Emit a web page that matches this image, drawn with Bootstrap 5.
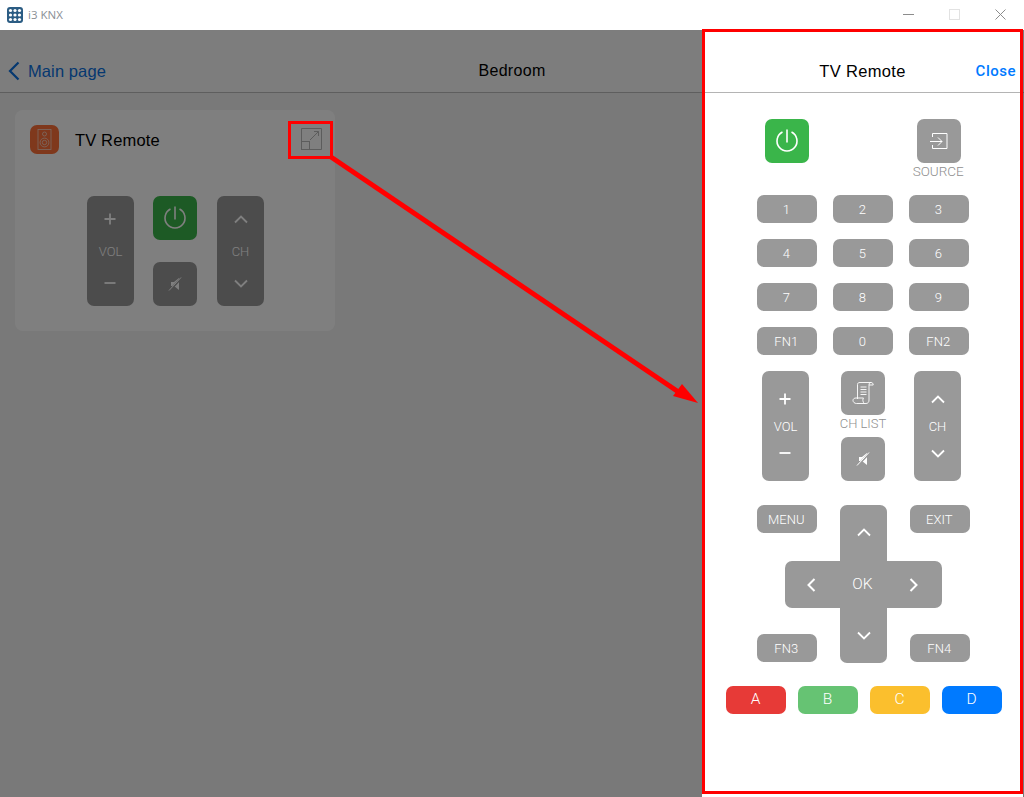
<!DOCTYPE html>
<html lang="en">
<head>
<meta charset="utf-8">
<title>i3 KNX</title>
<link href="https://cdn.jsdelivr.net/npm/bootstrap@5.3.0/dist/css/bootstrap.min.css" rel="stylesheet">
<style>
html,body{height:797px;overflow:hidden;background:#fff}
body{font-family:"Liberation Sans",Arial,sans-serif;color:#000}
.titlebar{height:30px;background:#fff;padding-left:7px}
.app-mark{width:16px;height:16px;display:block}
.app-name{font-family:"Open Sans",sans-serif;font-size:11.5px;color:#8a8f96;margin-left:5px}
.win-controls{margin-left:auto;margin-right:1px;padding-bottom:1px}
.win-btn{width:46px;height:29px;display:flex;align-items:center;justify-content:center}
.win-btn svg{display:block}
.workspace{height:767px;background:#f2f2f2}
.page-head{height:63px;background:#fafafa;border-bottom:1px solid #bcbcbc;padding-top:20px}
.back-link{color:#0a70e0;font-size:16.5px;text-decoration:none;padding-left:8px;gap:8px;letter-spacing:.1px}
.page-title{font-size:16px;letter-spacing:.3px}
.page-body{padding:17px 15px}
.room-card{width:320px;height:221px;background:#fff;border-radius:8px;padding:15px}
.speaker-icon{width:29px;height:29px;border-radius:7px;background:#ff7038;display:block}
.room-card-title{font-size:16.5px;margin-left:16px;letter-spacing:.15px;padding-top:1px}
.expand-icon{display:block;margin:-1px -2px 0 auto}
.mini-controls{margin-top:42px;gap:19px;padding-left:57px}
.mini-mid{gap:22px;margin-right:1px}
.rbtn{background:#999;color:#fff;border:0;padding:0;border-radius:7px;font-family:Roboto,sans-serif;font-weight:300;font-size:13px;line-height:1;display:flex;align-items:center;justify-content:center}
.rbtn:hover,.rbtn:active{background:#999;color:#fff}
.rbtn svg{display:block}
.sq{width:44px;height:44px}
.power,.power:hover{background:#3ab54a}
.rocker{width:47px;height:110px;display:grid;justify-items:center;align-items:center;grid-template-rows:40px 14px 40px;padding:8px 0}
.rocker-mini{grid-template-rows:46px 18px 46px;padding:0}
.backdrop{position:absolute;inset:30px 0 0 0;background:rgba(0,0,0,.5)}
.remote-panel{position:absolute;top:30px;left:702px;bottom:0;width:321px;background:#fff}
.remote-head{height:63px;border-bottom:1px solid #b4b4b4;padding:20px 0 0 1px}
.remote-title{font-size:16.5px;letter-spacing:.35px;flex:1;text-align:center;margin-right:1px}
.remote-close{position:absolute;right:7px;top:32px;color:#007aff;font-family:Roboto,sans-serif;font-size:15px;font-weight:500;letter-spacing:.5px;line-height:18px;text-decoration:none}
.remote-body{padding:26px 0 0 1px}
.key-grid{display:grid;grid-template-columns:repeat(3,60px);gap:16px;justify-content:center}
.key{height:28px;width:60px}
.pad-text{padding-right:1.5px}
.cell-center{display:flex;justify-content:center}
.cell-stack{display:flex;flex-direction:column;align-items:center}
.btn-label{font-family:Roboto,sans-serif;font-weight:300;font-size:13px;color:#8f8f8f;line-height:16px}
.label-source{font-size:13.5px;white-space:nowrap;padding-right:1.5px}
.top-row{margin-bottom:16px;height:60px}
.mid-row{margin-top:16px;padding-right:3px}
.mid-col{width:44px;margin:0 29px 0 32px}
.label-chlist{height:22px;line-height:17px;white-space:nowrap}
.nav-grid{display:grid;grid-template-columns:28px 32px 23px 47px 23px 32px 28px;grid-template-rows:28px 28px 47px 26px 29px;justify-content:center;margin:24px 0 0 1px}
.nav-menu{grid-area:1/1/2/3}
.nav-exit{grid-area:1/6/2/8}
.nav-fn3{grid-area:5/1/6/3;height:28px}
.nav-fn4{grid-area:5/6/6/8;height:28px}
.nav-v{grid-area:1/4/6/5;flex-direction:column;justify-content:space-between;padding:23px 0}
.nav-h{grid-area:3/2/4/7;justify-content:space-between;padding:0 24px 0 22px}
.ok-text{font-size:15.5px}
.color-row{gap:12px;margin:23px 0 0 1px}
.c-a,.c-a:hover{background:#e73a37}
.c-b,.c-b:hover{background:#66c373}
.c-c,.c-c:hover{background:#fbbf2d}
.c-d,.c-d:hover{background:#007aff}
.color-row .rbtn{font-size:15.5px}
.mark-box{position:absolute;border:3px solid #f00;pointer-events:none}
.mark-panel{left:702px;top:29px;width:321px;height:765px}
.mark-icon{left:288px;top:121px;width:45px;height:38px}
.mark-arrow{position:absolute;left:0;top:0;pointer-events:none}
</style>
</head>
<body>
<svg width="0" height="0" class="position-absolute">
<defs>
<symbol id="i-power" viewBox="0 0 24 24"><path d="M7.500 3.070A10 10 0 1 0 16.500 3.070" fill="none" stroke="currentColor" stroke-width="1.600"/><path d="M12 .5v13" stroke="currentColor" stroke-width="1.600" fill="none"/></symbol>
<symbol id="i-mute" viewBox="0 0 16 16"><path d="M4 6h3l5-4v12l-5-4H4z" fill="currentColor"/><path d="M2.500 14.500L14.500 2" stroke="#999" stroke-width="2.200"/><path d="M2 14.500L14 1.500" stroke="currentColor" stroke-width="1"/></symbol>
<symbol id="i-up" viewBox="0 0 14 9"><path d="M1 7.500L7 1.500l6 6" fill="none" stroke="currentColor" stroke-width="1.800"/></symbol>
<symbol id="i-down" viewBox="0 0 14 9"><path d="M1 1.500L7 7.500l6-6" fill="none" stroke="currentColor" stroke-width="1.800"/></symbol>
<symbol id="i-left" viewBox="0 0 9 14"><path d="M7.500 1L1.500 7l6 6" fill="none" stroke="currentColor" stroke-width="2"/></symbol>
<symbol id="i-right" viewBox="0 0 9 14"><path d="M1.500 1l6 6-6 6" fill="none" stroke="currentColor" stroke-width="2"/></symbol>
<symbol id="i-plus" viewBox="0 0 12 12"><path d="M6 .500v11M.500 6h11" stroke="currentColor" stroke-width="1.800" fill="none"/></symbol>
<symbol id="i-minus" viewBox="0 0 12 4"><path d="M.500 2h11" stroke="currentColor" stroke-width="1.800" fill="none"/></symbol>
</defs>
</svg>

<div class="titlebar d-flex align-items-center">
  <svg class="app-mark" viewBox="0 0 16 16"><rect width="16" height="16" rx="3" fill="#2b5c83"/><g fill="#fff"><circle cx="3.500" cy="3.500" r="1.600"/><circle cx="8" cy="3.500" r="1.600"/><circle cx="12.500" cy="3.500" r="1.600"/><circle cx="3.500" cy="8" r="1.600"/><circle cx="8" cy="8" r="1.600"/><circle cx="12.500" cy="8" r="1.600"/><circle cx="3.500" cy="12.500" r="1.600"/><circle cx="8" cy="12.500" r="1.600"/><circle cx="12.500" cy="12.500" r="1.600"/></g></svg>
  <span class="app-name">i3 KNX</span>
  <div class="win-controls d-flex">
    <div class="win-btn"><svg width="11" height="11" viewBox="0 0 11 11"><path d="M0 5.500h11" stroke="#8c8c8c" fill="none"/></svg></div>
    <div class="win-btn"><svg width="11" height="11" viewBox="0 0 11 11"><rect x=".5" y=".5" width="10" height="10" fill="none" stroke="#e2e2e2"/></svg></div>
    <div class="win-btn"><svg width="11" height="11" viewBox="0 0 11 11"><path d="M.5.500l10 10M10.500.500l-10 10" stroke="#8c8c8c" fill="none"/></svg></div>
  </div>
</div>

<div class="workspace">
  <header class="page-head d-flex align-items-center position-relative">
    <a href="#" class="back-link d-flex align-items-center">
      <svg width="12" height="20" viewBox="0 0 12 20"><path d="M10.500 1.500L2 10l8.500 8.500" fill="none" stroke="currentColor" stroke-width="2.200"/></svg>
      Main page
    </a>
    <div class="page-title position-absolute start-50 translate-middle-x">Bedroom</div>
  </header>
  <main class="page-body">
    <section class="room-card">
      <div class="d-flex align-items-center">
        <svg class="speaker-icon" viewBox="0 0 29 29"><rect x="8" y="4.500" width="13" height="20" fill="none" stroke="#f5d5c8" stroke-width=".8"/><circle cx="14.500" cy="9" r="2" fill="none" stroke="#f5d5c8" stroke-width=".8"/><circle cx="14.500" cy="17.500" r="4.400" fill="none" stroke="#f5d5c8" stroke-width=".8"/><circle cx="14.500" cy="17.500" r="2.200" fill="none" stroke="#f5d5c8" stroke-width=".8"/></svg>
        <span class="room-card-title">TV Remote</span>
        <svg class="expand-icon" width="22" height="22" viewBox="0 0 22 22"><path d="M1.500 13.500V.5h20v21H9.500" fill="none" stroke="#b8b8b8"/><rect x="1.500" y="13.500" width="8" height="8" fill="none" stroke="#b8b8b8"/><path d="M10 12l8.500-8.500M14 3.500h4.500V8" fill="none" stroke="#b8b8b8"/></svg>
      </div>
      <div class="mini-controls d-flex">
        <button class="btn rbtn rocker rocker-mini"><svg width="12" height="12"><use href="#i-plus"/></svg><span>VOL</span><svg width="12" height="4"><use href="#i-minus"/></svg></button>
        <div class="mini-mid d-flex flex-column">
          <button class="btn rbtn sq power"><svg width="24" height="24"><use href="#i-power"/></svg></button>
          <button class="btn rbtn sq"><svg width="16" height="16"><use href="#i-mute"/></svg></button>
        </div>
        <button class="btn rbtn rocker rocker-mini"><svg width="14" height="9"><use href="#i-up"/></svg><span>CH</span><svg width="14" height="9"><use href="#i-down"/></svg></button>
      </div>
    </section>
  </main>
</div>

<div class="backdrop"></div>

<aside class="remote-panel">
  <div class="remote-head d-flex align-items-center">
    <div class="remote-title">TV Remote</div>
    <a href="#" class="remote-close">Close</a>
  </div>
  <div class="remote-body">
    <div class="key-grid top-row">
      <div class="cell-center"><button class="btn rbtn sq power"><svg width="24" height="24"><use href="#i-power"/></svg></button></div>
      <div></div>
      <div class="cell-stack">
        <button class="btn rbtn sq"><svg width="20" height="20" viewBox="0 0 20 20"><path d="M3.500 6V2.500H18v15H3.500V14" fill="none" stroke="currentColor" stroke-width="1"/><path d="M1 10.500h12M9 6.500l4 4-4 4" fill="none" stroke="currentColor" stroke-width="1"/></svg></button>
        <span class="btn-label label-source">SOURCE</span>
      </div>
    </div>
    <div class="key-grid">
      <button class="btn rbtn key pad-text">1</button><button class="btn rbtn key pad-text">2</button><button class="btn rbtn key pad-text">3</button>
      <button class="btn rbtn key pad-text">4</button><button class="btn rbtn key pad-text">5</button><button class="btn rbtn key pad-text">6</button>
      <button class="btn rbtn key pad-text">7</button><button class="btn rbtn key pad-text">8</button><button class="btn rbtn key pad-text">9</button>
      <button class="btn rbtn key pad-text">FN1</button><button class="btn rbtn key pad-text">0</button><button class="btn rbtn key pad-text">FN2</button>
    </div>
    <div class="mid-row d-flex justify-content-center">
      <button class="btn rbtn rocker"><svg width="12" height="12"><use href="#i-plus"/></svg><span>VOL</span><svg width="12" height="4"><use href="#i-minus"/></svg></button>
      <div class="mid-col cell-stack">
        <button class="btn rbtn sq"><svg width="22" height="24" viewBox="0 0 22 24"><path d="M5.500 18V3.500C5.500 2 6.500 1.500 8 1.500h11c-1.500 0-2 1-2 2.500v15c0 2-1 3.500-3 3.500H4.500C2.500 22.500 1 21 1 19.500s1.200-2.500 3-2.500h7.500c-1 .8-1 4.500 1 5.500M19 1.500c1.500 0 2.200 1 2.200 2.500H17M8.500 6h6M8.500 8.500h6M8.500 11h6M8.500 13.500h6" fill="none" stroke="currentColor" stroke-width=".9"/></svg></button>
        <span class="btn-label label-chlist">CH LIST</span>
        <button class="btn rbtn sq"><svg width="16" height="16"><use href="#i-mute"/></svg></button>
      </div>
      <button class="btn rbtn rocker"><svg width="14" height="9"><use href="#i-up"/></svg><span>CH</span><svg width="14" height="9"><use href="#i-down"/></svg></button>
    </div>
    <div class="nav-grid">
      <button class="btn rbtn nav-menu pad-text">MENU</button>
      <button class="btn rbtn nav-exit pad-text">EXIT</button>
      <button class="btn rbtn nav-v"><svg width="14" height="9"><use href="#i-up"/></svg><svg width="14" height="9"><use href="#i-down"/></svg></button>
      <button class="btn rbtn nav-h"><svg width="9" height="14"><use href="#i-left"/></svg><span class="ok-text">OK</span><svg width="9" height="14"><use href="#i-right"/></svg></button>
      <button class="btn rbtn nav-fn3 pad-text">FN3</button>
      <button class="btn rbtn nav-fn4 pad-text">FN4</button>
    </div>
    <div class="color-row d-flex justify-content-center">
      <button class="btn rbtn key c-a">A</button>
      <button class="btn rbtn key c-b">B</button>
      <button class="btn rbtn key c-c">C</button>
      <button class="btn rbtn key c-d">D</button>
    </div>
  </div>
</aside>

<div class="mark-box mark-panel"></div>
<div class="mark-box mark-icon"></div>
<svg class="mark-arrow" width="1024" height="797" viewBox="0 0 1024 797"><path d="M331 157L680 393" stroke="#f00" stroke-width="5" fill="none"/><path d="M698 403L673 396L682 384z" fill="#f00"/></svg>
</body>
</html>
